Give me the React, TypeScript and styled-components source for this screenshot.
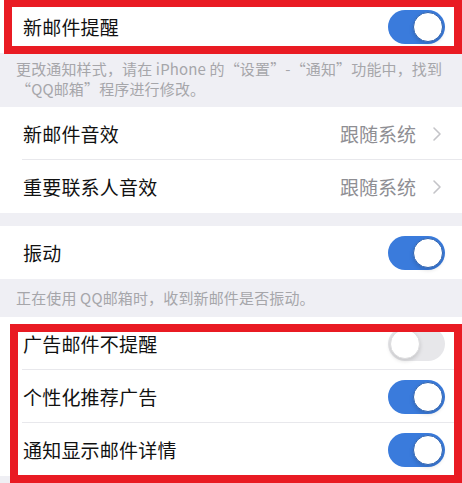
import React from "react";
import styled, { createGlobalStyle } from "styled-components";

const GlobalStyle = createGlobalStyle`
  html, body {
    margin: 0;
    padding: 0;
    background: #efeff4;
  }
  body {
    font-family: "Noto Sans CJK SC", "Noto Sans", sans-serif;
    -webkit-font-smoothing: antialiased;
  }
`;

const Page = styled.div`
  width: 462px;
  height: 483px;
  overflow: hidden;
  position: relative;
  background: #efeff4;
`;

const Group = styled.div<{ $gapTop?: number }>`
  background: #fff;
  margin-top: ${(p) => p.$gapTop ?? 0}px;
`;

const Row = styled.div<{ $divider?: boolean }>`
  height: 53px;
  display: flex;
  align-items: center;
  padding: 0 17px 0 23px;
  position: relative;
  box-sizing: border-box;
  ${(p) =>
    p.$divider &&
    `
    &::after {
      content: "";
      position: absolute;
      left: 22px;
      right: 0;
      bottom: 0;
      border-bottom: 1px solid #e8e8ec;
    }
  `}
`;

const Label = styled.span`
  flex: 1;
  font-size: 19px;
  color: #111;
  letter-spacing: 0.2px;
`;

const Value = styled.span`
  font-size: 19px;
  color: #8e8e93;
  margin-right: 16px;
`;

const Chevron = styled.svg`
  width: 10px;
  height: 16px;
  margin-right: 3px;
`;

const Note = styled.div<{ $padTop: number; $height: number }>`
  box-sizing: border-box;
  height: ${(p) => p.$height}px;
  padding: ${(p) => p.$padTop}px 8px 0 16px;
  font-size: 15px;
  line-height: 20px;
  letter-spacing: 0.15px;
  white-space: nowrap;
  color: #a6a6aa;
`;

const Track = styled.div<{ $on: boolean }>`
  width: 57px;
  height: 34px;
  border-radius: 17px;
  box-sizing: border-box;
  display: flex;
  align-items: center;
  padding: 0 2px;
  justify-content: ${(p) => (p.$on ? "flex-end" : "flex-start")};
  background: ${(p) => (p.$on ? "#3a7bdc" : "#e7e7ea")};
`;

const Knob = styled.div<{ $on: boolean }>`
  width: 30px;
  height: 30px;
  border-radius: 50%;
  background: #fff;
  box-sizing: border-box;
  border: 1px solid ${(p) => (p.$on ? "#2f63b0" : "#dcdcde")};
  box-shadow: 0 2px 4px rgba(0, 0, 0, 0.15);
`;

// red highlight frame drawn over a block of rows
const Frame = styled.div<{ $l: number; $t: number; $w: number; $h: number }>`
  position: absolute;
  left: ${(p) => p.$l}px;
  top: ${(p) => p.$t}px;
  width: ${(p) => p.$w}px;
  height: ${(p) => p.$h}px;
  box-sizing: border-box;
  border: 8px solid #e91b23;
  pointer-events: none;
`;

const Toggle = ({ on }: { on: boolean }) => (
  <Track $on={on}>
    <Knob $on={on} />
  </Track>
);

const Arrow = () => (
  <Chevron viewBox="0 0 10 16">
    <path d="M2 2l6 6-6 6" fill="none" stroke="#c4c4c8" strokeWidth="1.6" strokeLinecap="round" strokeLinejoin="round" />
  </Chevron>
);

export default function App() {
  return (
    <>
      <GlobalStyle />
      <Page>
        <Group>
          <Row>
            <Label>新邮件提醒</Label>
            <Toggle on />
          </Row>
        </Group>
        <Note $padTop={6} $height={54}>
          更改通知样式，请在 iPhone 的“设置”-“通知”功能中，找到
          <br />
          “QQ邮箱”程序进行修改。
        </Note>
        <Group>
          <Row $divider>
            <Label>新邮件音效</Label>
            <Value>跟随系统</Value>
            <Arrow />
          </Row>
          <Row>
            <Label>重要联系人音效</Label>
            <Value>跟随系统</Value>
            <Arrow />
          </Row>
        </Group>
        <Group $gapTop={13}>
          <Row>
            <Label>振动</Label>
            <Toggle on />
          </Row>
        </Group>
        <Note $padTop={9} $height={38}>
          正在使用 QQ邮箱时，收到新邮件是否振动。
        </Note>
        <Group>
          <Row $divider>
            <Label>广告邮件不提醒</Label>
            <Toggle on={false} />
          </Row>
          <Row $divider>
            <Label>个性化推荐广告</Label>
            <Toggle on />
          </Row>
          <Row>
            <Label>通知显示邮件详情</Label>
            <Toggle on />
          </Row>
        </Group>
        <Frame $l={4} $t={-1} $w={458} $h={55} />
        <Frame $l={10} $t={324} $w={452} $h={159} />
      </Page>
    </>
  );
}
